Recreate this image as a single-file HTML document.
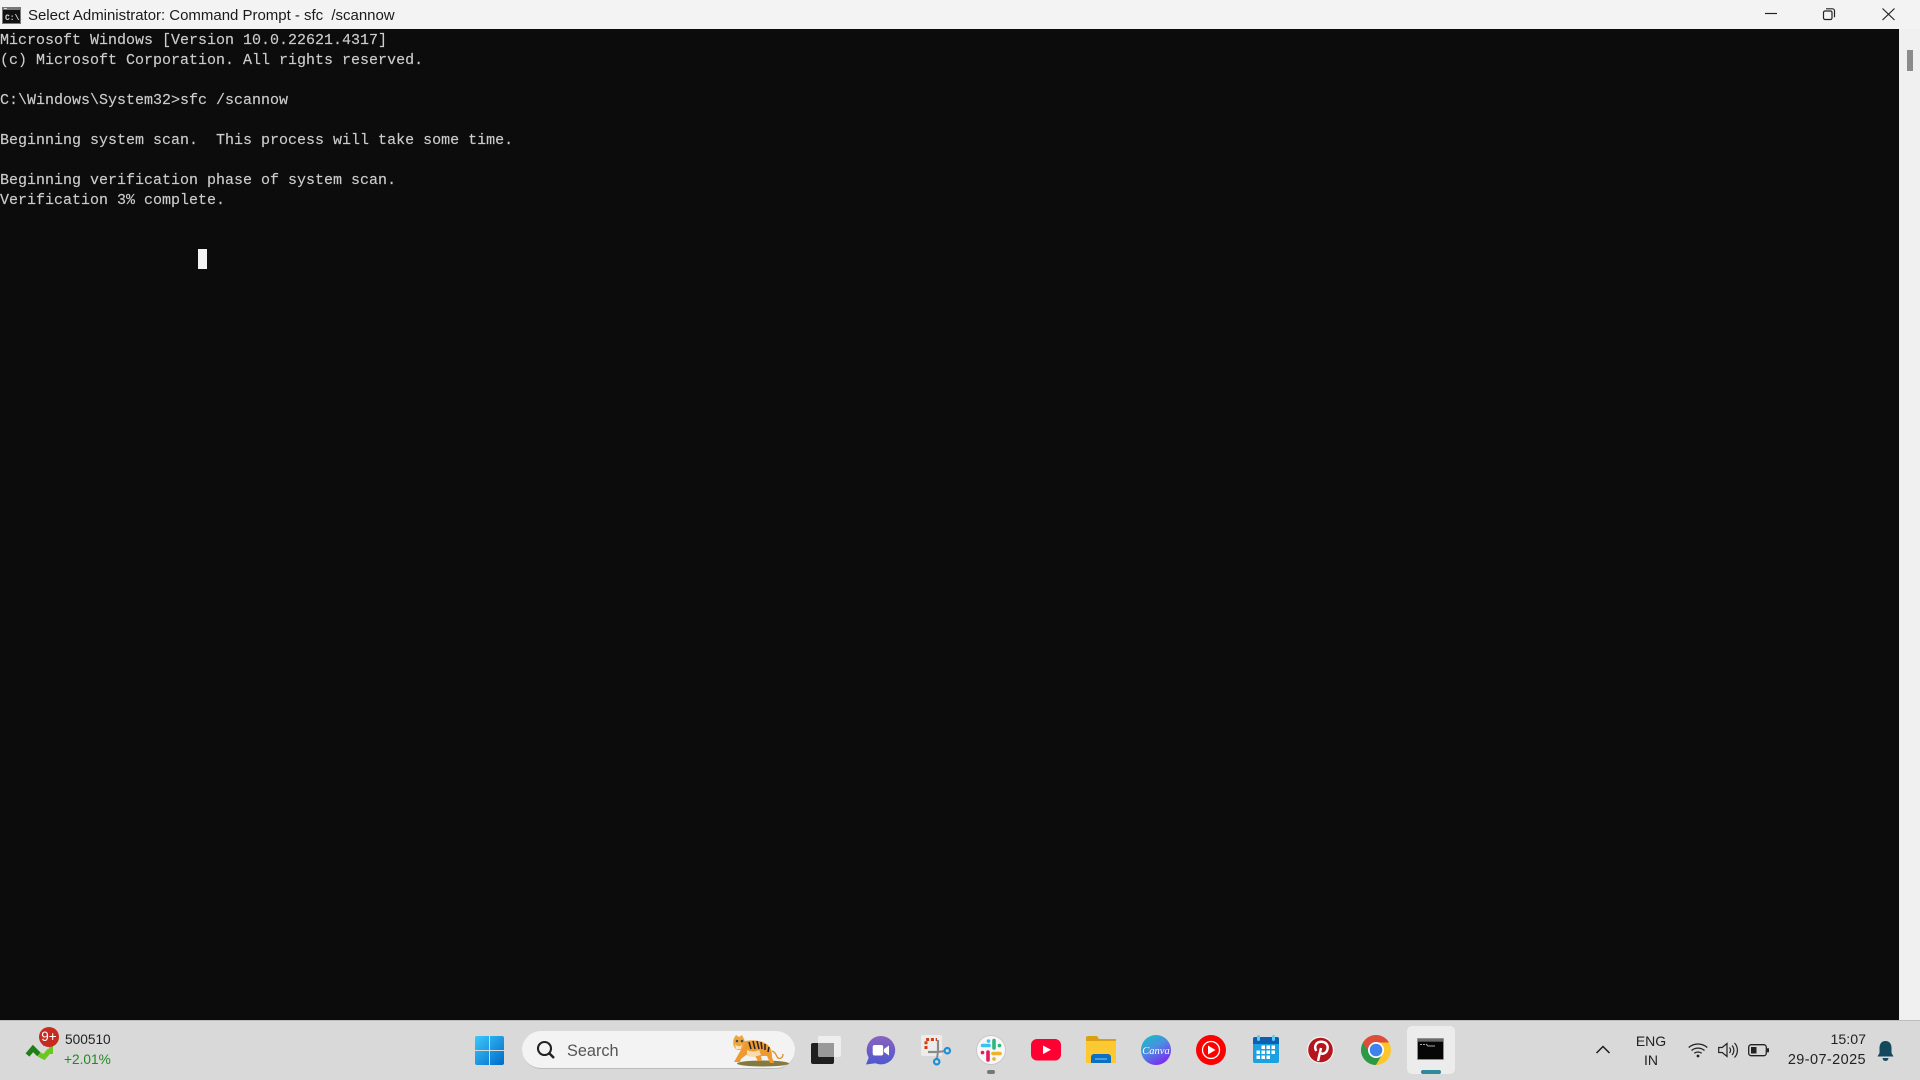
<!DOCTYPE html>
<html><head><meta charset="utf-8"><style>
html,body{margin:0;padding:0;width:1920px;height:1080px;overflow:hidden;background:#0c0c0c}
div,svg,pre{position:absolute}
.t{font-family:"Liberation Sans",sans-serif;white-space:pre;line-height:20px}
pre{margin:0;left:0;top:31px;font:15px/20px "Liberation Mono",monospace;color:#cccccc;-webkit-text-stroke:.15px #cccccc}
svg{overflow:visible}
</style></head><body>
<div style="left:0;top:0;width:1920px;height:29px;background:#f3f3f3"></div>
<svg style="left:2px;top:7px" width="19" height="17"><rect width="19" height="17" fill="#777"/><rect x="1" y="3" width="17" height="13" fill="#111"/><rect x="2" y="1" width="3" height="1" fill="#ddd"/><text x="3" y="13" font-family="Liberation Mono" font-size="8" font-weight="bold" fill="#ddd">C:\.</text></svg>
<div class="t" style="left:28px;top:6px;font-size:15px;color:#1a1a1a;letter-spacing:-.02px">Select Administrator: Command Prompt - sfc  /scannow</div>
<svg style="left:0;top:0" width="1920" height="29" fill="none" stroke="#222" stroke-width="1.2"><path d="M1765 13.500h12"/><rect x="1823.500" y="11" width="8.500" height="8.500" rx="1.500"/><path d="M1826 8.800h6.500a2 2 0 0 1 2 2v6.500"/><path d="M1882.500 8.500l12 11.500M1894.500 8.500l-12 11.500"/></svg>
<pre>Microsoft Windows [Version 10.0.22621.4317]
(c) Microsoft Corporation. All rights reserved.

C:\Windows\System32&gt;sfc /scannow

Beginning system scan.  This process will take some time.

Beginning verification phase of system scan.
Verification 3% complete.</pre>
<div style="left:198px;top:249px;width:9px;height:20px;background:#f2f2f2"></div>
<div style="left:1899px;top:29px;width:21px;height:991px;background:#f0f0f0"></div>
<div style="left:1907px;top:50px;width:6px;height:21px;background:#8b8b8b"></div>
<div style="left:0;top:1020px;width:1920px;height:60px;background:#d9d9d9;border-top:1px solid #bdbdbd;box-sizing:border-box"></div>

<svg style="left:26px;top:1040px" width="30" height="24"><path d="M1.500 15l5.500-6.500 6 6" fill="none" stroke="#1f7f16" stroke-width="5"/><path d="M13 14.500l5 2.500 6-7" fill="none" stroke="#6cc71f" stroke-width="5"/><path d="M17 2h10v12h-4V6h-6z" fill="#6cc71f"/></svg>
<div style="left:39px;top:1027px;width:20px;height:20px;border-radius:50%;background:#c72b20"></div>
<div class="t" style="left:39px;top:1027px;width:20px;text-align:center;font-size:13.500px;color:#fff">9+</div>
<div class="t" style="left:65px;top:1030px;font-size:13.700px;color:#222">500510</div>
<div class="t" style="left:64px;top:1050px;font-size:13.700px;color:#1f8a1f">+2.01%</div>

<svg style="left:475px;top:1036px" width="30" height="30"><defs><linearGradient id="w" x1="0" y1="0" x2="1" y2="1"><stop offset="0" stop-color="#3cc8fb"/><stop offset="1" stop-color="#0069c8"/></linearGradient></defs><path d="M0 2a2 2 0 0 1 2-2h12v14H0zM15 0h12a2 2 0 0 1 2 2v12H15zM0 15h14v14H2a2 2 0 0 1-2-2zM15 15h14v12a2 2 0 0 1-2 2H15z" fill="url(#w)"/></svg>
<div style="left:522px;top:1031px;width:273px;height:38px;border-radius:19px;background:#f3f3f3;border-bottom:1px solid #bbb;box-sizing:border-box"></div>
<svg style="left:536px;top:1040px" width="22" height="22" fill="none" stroke="#222" stroke-width="2.100"><circle cx="8.500" cy="8.500" r="6.500"/><path d="M13 13l5 5" stroke-width="2.500"/></svg>
<div class="t" style="left:567px;top:1041px;font-size:16.300px;color:#555">Search</div>
<svg style="left:725px;top:1028px" width="75" height="44"><ellipse cx="38" cy="35.500" rx="26" ry="3" fill="#86793f"/><path d="M17 14c8-3 20-2 26 3 3 3 4 7 4 12l2 6h-4l-3-7-6 0 1 5h-4l-4-7-8 1-5 4-1 3H9l4-7 4-7z" fill="#ef9a30"/><path d="M22 22c4 2 9 2 12 0l2 5-8 2-6-1z" fill="#f6dcb0"/><path d="M9 10l2-3 3 2 3-2 2 4c2 4 0 11-5 11s-7-6-5-12z" fill="#f0a53a"/><path d="M10 16c2 3 6 3 7 0l-1 5h-5z" fill="#f7e6c8"/><path d="M24 14l2 7M28 13l2 8M32 13l2 8M36 14l1 7M40 16l0 6M44 19l-1 5" stroke="#222" stroke-width="1.500" fill="none"/><path d="M47 23c4 1 4 5 6 7 2 1 5 0 5-4" stroke="#e08c2a" stroke-width="1.300" fill="none"/><circle cx="12" cy="13" r="1.300" fill="#3a5060"/><circle cx="17" cy="13" r="1.300" fill="#3a5060"/></svg>

<svg style="left:811px;top:1036px" width="31" height="29"><rect y="7" width="23" height="21" rx="2" fill="#1f1f1f"/><rect x="7" width="23" height="21" rx="2" fill="#eeeeee"/><path d="M7 7h16v14H9a2 2 0 0 1-2-2z" fill="#999"/></svg>
<svg style="left:866px;top:1036px" width="30" height="29"><defs><linearGradient id="v" x1="0" y1="0" x2="0" y2="1"><stop offset="0" stop-color="#8a63bd"/><stop offset="1" stop-color="#4f58cf"/></linearGradient></defs><path d="M15 0a14.200 14.200 0 1 1-5.500 27.300L0 28.500l2.700-7A14.200 14.200 0 0 1 15 0z" fill="url(#v)"/><rect x="6.700" y="9" width="10.500" height="10.500" rx="2" fill="#fff"/><path d="M18 13l5-3.500v10l-5-3.500z" fill="#fff"/></svg>
<svg style="left:921px;top:1035px" width="32" height="34"><rect width="21" height="21" rx="2" fill="#ececec"/><path d="M5 14V4.500h11" fill="none" stroke="#d33c10" stroke-width="3" stroke-dasharray="3 1.800"/><path d="M17 5v12H7" fill="none" stroke="#8a8a8a" stroke-width="2.200"/><path d="M17 17l-1 6M17 17l7-1" stroke="#8a8a8a" stroke-width="2" fill="none"/><circle cx="26.300" cy="15.700" r="2.700" fill="none" stroke="#1c8fd6" stroke-width="2.200"/><circle cx="15.700" cy="26.700" r="2.700" fill="none" stroke="#1c8fd6" stroke-width="2.200"/></svg>
<svg style="left:976px;top:1035px" width="30" height="30"><circle cx="15" cy="15" r="14.500" fill="#f7f7f7" stroke="#c8c8c8"/><g fill="none" stroke-width="3.600" stroke-linecap="round"><path d="M6.500 10.500H13" stroke="#36c5f0"/><path d="M12.500 6v.1" stroke="#36c5f0"/><path d="M18 5.500V13" stroke="#2eb67d"/><path d="M23.500 10.500v.1" stroke="#2eb67d"/><path d="M24 18.500h-7" stroke="#ecb22e"/><path d="M18 24v-.1" stroke="#ecb22e"/><path d="M12 25v-8" stroke="#e01e5a"/><path d="M6.500 17.500v.1" stroke="#e01e5a"/></g></svg>
<div style="left:987px;top:1070px;width:8px;height:4px;border-radius:2px;background:#777"></div>
<svg style="left:1031px;top:1039px" width="30" height="22"><rect width="30" height="21.500" rx="6" fill="#ff0033"/><path d="M12 6.500l8 4.300-8 4.300z" fill="#fff"/></svg>
<svg style="left:1086px;top:1036px" width="31" height="28"><path d="M0 2a2 2 0 0 1 2-2h9l2 3h17v5H0z" fill="#d9a013"/><path d="M0 5h30v22H0z" fill="#fdc933"/><path d="M5 27v-6a3 3 0 0 1 3-3h14a3 3 0 0 1 3 3v6z" fill="#0d6fc4"/><path d="M9 23h12" stroke="#6cc0f0" stroke-width="1.200"/></svg>
<svg style="left:1141px;top:1035px" width="30" height="30"><defs><linearGradient id="c" x1="0" y1="0" x2=".6" y2="1"><stop offset="0" stop-color="#0cc6c4"/><stop offset=".5" stop-color="#4a8fe0"/><stop offset="1" stop-color="#7b2ff2"/></linearGradient></defs><circle cx="15" cy="15" r="15" fill="url(#c)"/><text x="15" y="19" text-anchor="middle" font-family="Liberation Serif" font-style="italic" font-size="10.500" fill="#fff">Canva</text></svg>
<svg style="left:1196px;top:1035px" width="30" height="30"><circle cx="15" cy="15" r="15" fill="#ff0000"/><circle cx="15" cy="15" r="8.500" fill="none" stroke="#fff" stroke-width="1.300"/><path d="M12 10.500l7.500 4.500-7.500 4.500z" fill="#fff"/></svg>
<svg style="left:1253px;top:1035px" width="27" height="29"><rect y="2" width="26" height="26" rx="2" fill="#1ba1e2"/><path d="M0 4a2 2 0 0 1 2-2h22a2 2 0 0 1 2 2v5H0z" fill="#0f5fb0"/><rect x="4" y="0" width="3" height="6" rx="1.500" fill="#5ecbf2"/><rect x="19" y="0" width="3" height="6" rx="1.500" fill="#5ecbf2"/><g fill="#fff"><rect x="8.500" y="10.500" width="3.500" height="3.500"/><rect x="13.500" y="10.500" width="3.500" height="3.500"/><rect x="18.500" y="10.500" width="3.500" height="3.500"/><rect x="3.500" y="15.500" width="3.500" height="3.500"/><rect x="8.500" y="15.500" width="3.500" height="3.500"/><rect x="13.500" y="15.500" width="3.500" height="3.500"/><rect x="18.500" y="15.500" width="3.500" height="3.500"/><rect x="3.500" y="20.500" width="3.500" height="3.500"/><rect x="8.500" y="20.500" width="3.500" height="3.500"/><rect x="13.500" y="20.500" width="3.500" height="3.500"/></g></svg>
<svg style="left:1307px;top:1036px" width="27" height="28"><circle cx="13.500" cy="14" r="13.500" fill="#f5f5f5"/><circle cx="13.500" cy="14" r="12.300" fill="#b5151c"/><path d="M11 25l3-13M9.300 15C6.500 10 9.500 5.800 14 5.800s7.500 2.700 6.500 7.200-5.500 6-7.500 3.500" fill="none" stroke="#fff" stroke-width="2.500"/></svg>
<svg style="left:1361px;top:1035px" width="30" height="30"><circle cx="15" cy="15" r="15" fill="#fcc62f"/><path d="M2 7.500L8.500 11.250 15 22.500 21.500 18.750 15 30A15 15 0 0 1 2 7.500z" fill="#2b9a47"/><path d="M2 7.500A15 15 0 0 1 28 7.500H15L8.500 18.750z" fill="#dd4b3a"/><circle cx="15" cy="15" r="8" fill="#fff"/><circle cx="15" cy="15" r="6.300" fill="#3f82ed"/></svg>
<div style="left:1407px;top:1026px;width:48px;height:48px;border-radius:5px;background:#ececec"></div>
<svg style="left:1417px;top:1038px" width="28" height="24"><rect width="27" height="22" rx="1" fill="#8f8f8f"/><rect x="1" y="3.500" width="25" height="17.500" fill="#060606"/><rect x="1" y="1" width="25" height="2" fill="#6a6a6a"/><path d="M3 6.500h2M6 6.500h2M9 6l2 2h7" stroke="#aaa" fill="none"/></svg>
<div style="left:1421px;top:1070px;width:20px;height:4px;border-radius:2px;background:#2c8a9b"></div>

<svg style="left:1596px;top:1045px" width="14" height="10" fill="none" stroke="#1c1c1c" stroke-width="1.500"><path d="M.500 8L7 1.500 13.500 8"/></svg>
<div class="t" style="left:1631px;top:1031px;width:40px;text-align:center;font-size:14px;color:#222">ENG</div>
<div class="t" style="left:1631px;top:1050px;width:40px;text-align:center;font-size:14px;color:#222">IN</div>
<svg style="left:1688px;top:1042px" width="22" height="16" fill="none" stroke="#222" stroke-width="1.300"><path d="M.700 5.500a14 14 0 0 1 18.600 0M3.500 8.500a10 10 0 0 1 13 0M6.300 11.300a6 6 0 0 1 7.400 0"/><circle cx="10" cy="14" r="1.400" fill="#222" stroke="none"/></svg>
<svg style="left:1718px;top:1042px" width="22" height="17" fill="none" stroke="#222" stroke-width="1.200"><path d="M.700 5.500h3.500L9 1.500v13l-4.800-4H.700z"/><path d="M11.500 5.500a4 4 0 0 1 0 5.500M14 3.500a7 7 0 0 1 0 9.500M16.500 1a10.500 10.500 0 0 1 0 14.500"/></svg>
<svg style="left:1748px;top:1044px" width="21" height="13"><rect x=".7" y=".7" width="17.600" height="11" rx="2.500" fill="none" stroke="#222" stroke-width="1.300"/><rect x="3" y="3" width="5.500" height="6.500" fill="#222"/><rect x="19" y="4" width="2" height="4.500" rx="1" fill="#222"/></svg>
<div class="t" style="left:1766px;top:1030px;width:100px;text-align:right;font-size:14.200px;color:#222">15:07</div>
<div class="t" style="left:1766px;top:1050px;width:100px;text-align:right;font-size:14.500px;letter-spacing:.4px;color:#222">29-07-2025</div>
<svg style="left:1877px;top:1041px" width="17" height="20"><path d="M8.500 0c4 0 6 3 6 7v5l2 3.500H.500L2.500 12V7c0-4 2-7 6-7z" fill="#12495c"/><path d="M5.500 17h6a3 3 0 0 1-6 0z" fill="#12495c"/></svg>
</body></html>
